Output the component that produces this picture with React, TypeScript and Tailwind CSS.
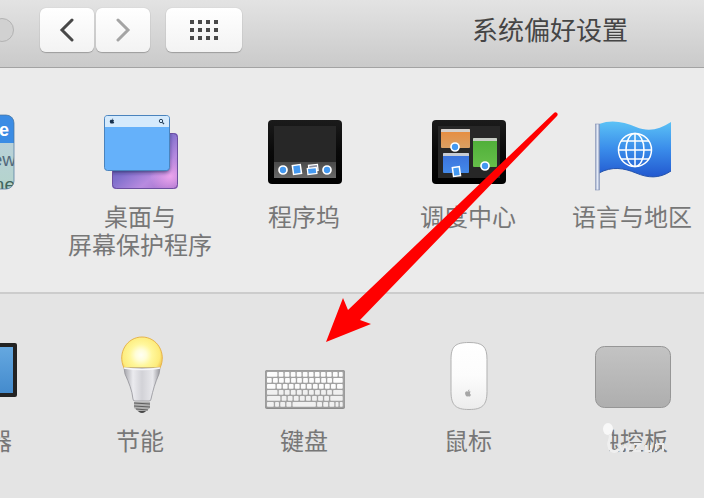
import React from 'react';
import { FaApple } from 'react-icons/fa';

interface PrefItemProps {
  lines: string[];
  name?: string;
  children: React.ReactNode;
}

const PrefItem: React.FC<PrefItemProps> = ({ lines, name, children }) => (
  <button type="button" aria-label={name} className="flex flex-col items-center gap-3">
    {children}
    <span className="text-2xl leading-7 text-[#777777] whitespace-nowrap">
      {lines.map((line) => (
        <span key={line} className="block">{line}</span>
      ))}
    </span>
  </button>
);

const Icon: React.FC<{ children: React.ReactNode }> = ({ children }) => (
  <svg viewBox="0 0 80 80" className="w-20 h-20 shrink-0 overflow-visible" aria-hidden="true">
    {children}
  </svg>
);

const GeneralIcon = () => (
  <Icon>
    <defs>
      <linearGradient id="gen" x1="0" y1="0" x2="0" y2="1">
        <stop offset="0" stopColor="#bccfe2" />
        <stop offset="1" stopColor="#b4d4cb" />
      </linearGradient>
      <clipPath id="genClip"><rect x="4" y="3" width="74" height="74" rx="8" /></clipPath>
    </defs>
    <g clipPath="url(#genClip)">
      <rect x="4" y="3" width="74" height="74" fill="url(#gen)" />
      <rect x="4" y="3" width="74" height="28" fill="#3b8ce4" />
      <text x="73" y="24" textAnchor="end" fontSize="18" fontWeight="700" fill="#fff">File</text>
      <text x="80" y="54" textAnchor="end" fontSize="19" fill="#536a7c">New</text>
      <text x="79" y="79" textAnchor="end" fontSize="19" fill="#41655d">One</text>
    </g>
    <rect x="4" y="3" width="74" height="74" rx="8" fill="none" stroke="#47749b" strokeOpacity=".7" />
  </Icon>
);

const DesktopIcon = () => (
  <Icon>
    <defs>
      <linearGradient id="saver" x1="0" y1="0" x2="1" y2="1">
        <stop offset="0" stopColor="#5c55ad" />
        <stop offset=".45" stopColor="#8070cc" />
        <stop offset=".7" stopColor="#b88be0" />
        <stop offset="1" stopColor="#a069c6" />
      </linearGradient>
      <radialGradient id="saverGlow">
        <stop offset="0" stopColor="#eda5ee" />
        <stop offset="1" stopColor="#eda5ee" stopOpacity="0" />
      </radialGradient>
      <filter id="winShadow" x="-20%" y="-20%" width="140%" height="140%">
        <feDropShadow dx="0" dy="2" stdDeviation="2" floodColor="#1d2152" floodOpacity=".8" />
      </filter>
      <clipPath id="saverClip"><rect x="12" y="21" width="66" height="56" rx="4" /></clipPath>
    </defs>
    <g clipPath="url(#saverClip)">
      <rect x="12" y="21" width="66" height="56" fill="url(#saver)" />
      <ellipse cx="70" cy="64" rx="20" ry="18" fill="url(#saverGlow)" />
      <rect x="4" y="3" width="65" height="55" rx="3" fill="#50a8f8" filter="url(#winShadow)" />
    </g>
    <rect x="12.5" y="21.5" width="65" height="55" rx="4" fill="none" stroke="#6c4f9f" />
    <rect x="4.5" y="3.5" width="65" height="55" rx="3" fill="#65b1fa" stroke="#4a83bd" />
    <path d="M5 15V6q0-2 2-2h60q2 0 2 2v9z" fill="#d5eafc" />
    <FaApple x="9" y="6" size="6" color="#17304c" />
    <circle cx="61" cy="9" r="1.7" fill="none" stroke="#28425d" />
    <path d="M62.3 10.3 64 12" stroke="#28425d" strokeWidth="1.2" />
  </Icon>
);

const ScreenFrame = () => (
  <>
    <defs>
      <linearGradient id="frame" x1="0" y1="0" x2="0" y2="1">
        <stop offset="0" stopColor="#1b1b1b" />
        <stop offset=".5" stopColor="#090909" />
        <stop offset="1" stopColor="#000" />
      </linearGradient>
    </defs>
    <rect x="4" y="8" width="74" height="64" rx="4" fill="url(#frame)" />
    <rect x="10" y="14" width="62" height="52" fill="#272727" />
  </>
);

const Badge: React.FC<{ x: number; y: number }> = ({ x, y }) => (
  <circle cx={x} cy={y} r="4" fill="#4499f1" stroke="#fff" strokeWidth="1.7" />
);

const DockIcon = () => (
  <Icon>
    <ScreenFrame />
    <defs>
      <linearGradient id="dock" x1="0" y1="0" x2="0" y2="1">
        <stop offset="0" stopColor="#4a4a4a" />
        <stop offset="1" stopColor="#696969" />
      </linearGradient>
    </defs>
    <rect x="10" y="50" width="62" height="16" fill="url(#dock)" />
    <Badge x={19} y={58} />
    <rect x="29" y="53" width="8" height="9" fill="#4499f1" stroke="#fff" strokeWidth="1.5" transform="rotate(-8 33 58)" />
    <g fill="#4499f1" stroke="#fff" strokeWidth="1.3" transform="rotate(-6 48 58)">
      <rect x="45" y="53" width="9" height="6" fill="#8a8ea0" />
      <rect x="43.5" y="56" width="9" height="6" />
    </g>
    <Badge x={63} y={58} />
  </Icon>
);

const MissionIcon = () => (
  <Icon>
    <ScreenFrame />
    <defs>
      <linearGradient id="mcO" x1="0" y1="0" x2="0" y2="1"><stop offset="0" stopColor="#e88b3c" /><stop offset="1" stopColor="#daa064" /></linearGradient>
      <linearGradient id="mcB" x1="0" y1="0" x2="0" y2="1"><stop offset="0" stopColor="#3a70da" /><stop offset="1" stopColor="#4389e9" /></linearGradient>
      <linearGradient id="mcG" x1="0" y1="0" x2="0" y2="1"><stop offset="0" stopColor="#4eae38" /><stop offset="1" stopColor="#66bf4a" /></linearGradient>
    </defs>
    <rect x="13" y="17" width="29" height="19" rx="1" fill="url(#mcO)" />
    <path d="M13 20v-2q0-1 1-1h27q1 0 1 1v2z" fill="#d3cfcb" />
    <rect x="15" y="41" width="26" height="20" rx="1" fill="url(#mcB)" />
    <path d="M15 44v-2q0-1 1-1h24q1 0 1 1v2z" fill="#c8ccd3" />
    <rect x="45" y="26" width="24" height="29" rx="1" fill="url(#mcG)" />
    <path d="M45 29v-2q0-1 1-1h22q1 0 1 1v2z" fill="#c8cdc6" />
    <Badge x={27} y={35} />
    <Badge x={57} y={54} />
    <rect x="25" y="55" width="7" height="9" fill="#4499f1" stroke="#fff" strokeWidth="1.5" transform="rotate(-8 29 60)" />
  </Icon>
);

const FlagIcon = () => (
  <Icon>
    <defs>
      <linearGradient id="flag" x1="0" y1="0" x2="0" y2="1">
        <stop offset="0" stopColor="#5bc2f6" />
        <stop offset=".5" stopColor="#3a8cea" />
        <stop offset="1" stopColor="#2258cf" />
      </linearGradient>
      <linearGradient id="pole" x1="0" y1="0" x2="1" y2="0">
        <stop offset="0" stopColor="#9aa8c8" />
        <stop offset=".5" stopColor="#e3e9f5" />
        <stop offset="1" stopColor="#8a99bf" />
      </linearGradient>
    </defs>
    <path d="M7 12C20 7 32 10 44 15s23 3 35-5v49c-12 8-23 7-35 2S20 54 7 61z" fill="url(#flag)" />
    <path d="M7 61c13-7 25-5 37 0s23 6 35-2" fill="none" stroke="#2453ac" />
    <rect x="3.5" y="12" width="4" height="66" fill="url(#pole)" stroke="#8593b5" strokeWidth=".6" />
    <g fill="none" stroke="#fff" strokeWidth="1.5">
      <circle cx="43" cy="38" r="16.5" />
      <ellipse cx="43" cy="38" rx="9" ry="16.5" />
      <path d="M43 21v34M26 38h34M29 29h28M29 47h28" />
    </g>
  </Icon>
);

const DisplayIcon = () => (
  <Icon>
    <defs>
      <linearGradient id="disp" x1="0" y1="0" x2="0" y2="1">
        <stop offset="0" stopColor="#65a8e0" />
        <stop offset="1" stopColor="#448bcd" />
      </linearGradient>
    </defs>
    <rect x="-1" y="7" width="82" height="54" rx="2" fill="#232323" />
    <rect x="3" y="11" width="74" height="46" fill="url(#disp)" />
  </Icon>
);

const BulbIcon = () => (
  <Icon>
    <defs>
      <radialGradient id="glow" gradientUnits="userSpaceOnUse" cx="41" cy="19" r="22">
        <stop offset="0" stopColor="#fffff4" />
        <stop offset=".25" stopColor="#fffdd8" />
        <stop offset=".5" stopColor="#fff79c" />
        <stop offset=".85" stopColor="#fdec7c" />
        <stop offset="1" stopColor="#f3c957" />
      </radialGradient>
      <linearGradient id="neck" x1="0" y1="0" x2="1" y2="0">
        <stop offset="0" stopColor="#a5a5ab" />
        <stop offset=".25" stopColor="#ebebef" />
        <stop offset=".5" stopColor="#d2d2d7" />
        <stop offset=".8" stopColor="#e8e8ec" />
        <stop offset="1" stopColor="#95959b" />
      </linearGradient>
    </defs>
    <path d="M24 32C17 17 27 1 42 1s25 16 18 31z" fill="url(#glow)" stroke="#e7b44c" />
    <path d="M24 32h36l-1 6c-4 9-6 16-8 25q0 2-2 2H35q-2 0-2-2c-1-9-4-16-8-25z" fill="url(#neck)" stroke="#929298" strokeWidth=".8" />
    <path d="M24 32q18 3 36 0" stroke="#f6f6fa" strokeWidth="1.5" fill="none" />
    <path d="M34 66h16v6l-5 4q-3 2-6 0l-5-4z" fill="#b0b0b0" />
    <path d="m34 67 16 1M34 70l16 1M36 73l12 1" stroke="#5e5e5e" strokeWidth="1.2" />
    <path d="M38 75h8q-4 4-8 0z" fill="#474747" />
  </Icon>
);

// relative key widths, every row is stretched to the same total
const KEY_ROWS = [
  [11, 5, 5, 5, 5, 5, 5, 5, 5, 5, 5, 4],
  [5, 5, 5, 5, 5, 5, 5, 5, 5, 5, 5, 10],
  [9, 5, 5, 5, 5, 5, 5, 5, 5, 5, 5, 6],
  [11, 5, 5, 5, 5, 5, 5, 5, 5, 5, 10],
  [14, 5, 5, 5, 5, 5, 5, 5, 5, 13],
  [7, 4, 5, 5, 24, 5, 5, 5, 3, 3],
];

const KeyboardIcon = () => (
  <Icon>
    <rect x="1" y="34" width="80" height="39" rx="2" fill="#8c8c8c" />
    <rect x="1.5" y="34.5" width="79" height="37" rx="2" fill="#a2a2a2" stroke="#9c9c9c" />
    {KEY_ROWS.map((row, r) => {
      const unit = (77 - row.length * 1.3) / row.reduce((a, b) => a + b, 0);
      let x = 3;
      return row.map((w, i) => {
        const left = x;
        x += w * unit + 1.3;
        return <rect key={`${r}-${i}`} x={left} y={36 + r * 6} width={w * unit} height="4.7" rx=".8" fill={r < 3 ? '#fcfcfc' : '#f0f0f0'} />;
      });
    })}
  </Icon>
);

const MouseIcon = () => (
  <Icon>
    <defs>
      <linearGradient id="mouse" x1="0" y1="0" x2="0" y2="1">
        <stop offset="0" stopColor="#fff" />
        <stop offset=".5" stopColor="#fcfcfc" />
        <stop offset="1" stopColor="#ececec" />
      </linearGradient>
    </defs>
    <path d="M41 6.500c14 0 18 4 18 17v32c0 14-5 18-18 18s-18-4-18-18v-32c0-13 4-17 18-17z" fill="url(#mouse)" stroke="#b1b1b1" />
    <FaApple x="36" y="53" size="8" color="#a6a6a6" />
  </Icon>
);

const TrackpadIcon = () => (
  <Icon>
    <defs>
      <linearGradient id="pad" x1="0" y1="0" x2="0" y2="1">
        <stop offset="0" stopColor="#c3c3c3" />
        <stop offset="1" stopColor="#aeaeae" />
      </linearGradient>
    </defs>
    <rect x="3.5" y="10.5" width="75" height="61" rx="9" fill="url(#pad)" stroke="#969696" />
  </Icon>
);

const Watermark = () => (
  <svg viewBox="0 0 80 40" className="w-20 h-10" aria-hidden="true">
    <path d="M0 4h13v31H0z" fill="#e4e4e4" />
    <ellipse cx="12" cy="10" rx="5" ry="6" fill="#f8f8f8" />
    <path d="M14 15c2 5-3 8-1 12 1 6 7 7 10 3" fill="none" stroke="#efefef" strokeWidth="3" />
    <path d="m23 25 3 7 3-6 3 6 3-7M38 25h6l-6 7h7M50 26v6h5v-6M60 25v7M60 25h7v7" fill="none" stroke="#ececec" strokeWidth="2" />
  </svg>
);

export default function App() {
  return (
    <main className="min-h-screen overflow-hidden relative bg-[#e4e4e4] font-['Liberation_Sans','Noto_Sans_CJK_SC',sans-serif]">
      {/* Toolbar */}
      <header className="flex items-start h-[68px] pt-2 border-b border-[#a3a3a3] bg-linear-to-b from-[#e3e3e3] to-[#cacaca]">
        <button type="button" aria-label="缩放窗口" className="-ml-2.5 mt-2.5 mr-[26px] size-6 shrink-0 rounded-full border border-[#b3b3b3] bg-[#d1d1d1]" />
        <div className="flex gap-0.5">
          <button type="button" aria-label="后退" className="flex items-center justify-center w-[54px] h-11 rounded-md bg-linear-to-b from-white to-[#f3f3f3] shadow-[0_1px_1px_#9d9d9d,0_0_1px_#a8a8a8]">
            <svg viewBox="0 0 16 24" className="w-4 h-6" aria-hidden="true">
              <path d="M13 2 3 12l10 10" fill="none" stroke="#484848" strokeWidth="3" strokeLinecap="round" />
            </svg>
          </button>
          <button type="button" aria-label="前进" className="flex items-center justify-center w-[54px] h-11 rounded-md bg-linear-to-b from-white to-[#f3f3f3] shadow-[0_1px_1px_#9d9d9d,0_0_1px_#a8a8a8]">
            <svg viewBox="0 0 16 24" className="w-4 h-6" aria-hidden="true">
              <path d="m3 2 10 10L3 22" fill="none" stroke="#a4a4a4" strokeWidth="3" strokeLinecap="round" />
            </svg>
          </button>
        </div>
        <button type="button" aria-label="显示全部" className="ml-4 flex items-center justify-center w-[76px] h-11 rounded-md bg-linear-to-b from-white to-[#f3f3f3] shadow-[0_1px_1px_#9d9d9d,0_0_1px_#a8a8a8]">
          <svg viewBox="0 0 28 20" className="w-7 h-5" aria-hidden="true">
            {[0, 8, 16].map((y) => [0, 8, 16, 24].map((x) => (
              <rect key={`${x}-${y}`} x={x} y={y} width="4" height="4" fill="#4a4a4a" />
            )))}
          </svg>
        </button>
        <h1 className="ml-[230px] mt-[5px] text-[26px] leading-9 text-[#454545] whitespace-nowrap">系统偏好设置</h1>
      </header>

      {/* Personal */}
      <section className="bg-[#ebebeb] border-b-2 border-[#cccccc] pt-11 pb-8">
        <div className="-ml-[106px] grid grid-cols-[repeat(5,164px)] items-start">
          <PrefItem lines={[]} name="通用"><GeneralIcon /></PrefItem>
          <PrefItem lines={['桌面与', '屏幕保护程序']}><DesktopIcon /></PrefItem>
          <PrefItem lines={['程序坞']}><DockIcon /></PrefItem>
          <PrefItem lines={['调度中心']}><MissionIcon /></PrefItem>
          <PrefItem lines={['语言与地区']}><FlagIcon /></PrefItem>
        </div>
      </section>

      {/* Hardware */}
      <section className="pt-[42px] pb-10">
        <div className="-ml-[106px] grid grid-cols-[repeat(5,164px)] items-start">
          <PrefItem lines={['显示器']}><DisplayIcon /></PrefItem>
          <PrefItem lines={['节能']}><BulbIcon /></PrefItem>
          <PrefItem lines={['键盘']}><KeyboardIcon /></PrefItem>
          <PrefItem lines={['鼠标']}><MouseIcon /></PrefItem>
          <div className="relative flex flex-col items-center">
            <PrefItem lines={['触控板']}><TrackpadIcon /></PrefItem>
            <div className="absolute left-[46px] top-[83px] pointer-events-none"><Watermark /></div>
          </div>
        </div>
      </section>

      {/* Pointer to the keyboard pane */}
      <svg viewBox="0 0 240 240" className="absolute left-[322px] top-[108px] w-60 h-60 pointer-events-none" aria-hidden="true">
        <path d="M232 5c2-2 5 1 3 3L38 212l11 4-45 18 17-44 5 12z" fill="#ff0000" />
      </svg>
    </main>
  );
}
